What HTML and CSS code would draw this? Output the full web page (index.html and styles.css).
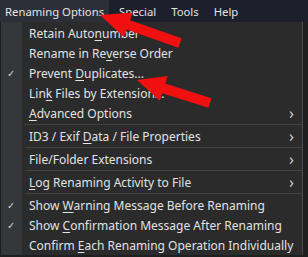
FILE: index.html
```html
<!DOCTYPE html>
<html lang="en">
<head>
<meta charset="UTF-8">
<title>Renaming Options</title>
<link rel="stylesheet" href="styles.css">
</head>
<body>
    <div class="menubar">
        <span class="top active">Renaming Options</span>
        <span class="top">Special</span>
        <span class="top">Tools</span>
        <span class="top">Help</span>
    </div>

    <div class="menu">
        <div class="item"><span class="check"></span><span class="label">Retain Auto<u>n</u>umber</span></div>
        <div class="item"><span class="check"></span><span class="label">Rename in Re<u>v</u>erse Order</span></div>
        <div class="item"><span class="check">&#10003;</span><span class="label">Prevent <u>D</u>uplicates...</span></div>
        <div class="item"><span class="check"></span><span class="label">Lin<u>k</u> Files by Extension...</span></div>
        <div class="item"><span class="check"></span><span class="label"><u>A</u>dvanced Options</span><span class="sub">&#8250;</span></div>
        <div class="sep"></div>
        <div class="item"><span class="check"></span><span class="label">ID3 / Exif <u>D</u>ata / File Properties</span><span class="sub">&#8250;</span></div>
        <div class="sep"></div>
        <div class="item"><span class="check"></span><span class="label">File/Folder Extensions</span><span class="sub">&#8250;</span></div>
        <div class="sep"></div>
        <div class="item"><span class="check"></span><span class="label"><u>L</u>og Renaming Activity to File</span><span class="sub">&#8250;</span></div>
        <div class="sep"></div>
        <div class="item"><span class="check">&#10003;</span><span class="label">Show <u>W</u>arning Message Before Renaming</span></div>
        <div class="item"><span class="check">&#10003;</span><span class="label">Show <u>C</u>onfirmation Message After Renaming</span></div>
        <div class="item"><span class="check"></span><span class="label">Confirm <u>E</u>ach Renaming Operation Individually</span></div>
    </div>

    <!-- red arrows drawn over the screenshot -->
    <svg class="arrows" width="308" height="257" viewBox="0 0 308 257">
        <polygon points="100,15 132.6,12.6 130,20.2 181.7,38.3 178.4,47.7 126.6,29.6 124,37.2" />
        <polygon points="137,80 167.6,76 165.2,83.6 211.5,98.2 208.5,107.8 162.2,93.2 159.8,100.8" />
    </svg>
</body>
</html>
```

FILE: styles.css
```css
/* fondo general */
body {
    margin: 0;
    padding: 0;
    width: 308px;
    height: 257px;
    overflow: hidden;
    background-color: #1f1f1f;
    color: #e2e2e2;
    font-family: "Noto Sans", "Open Sans", sans-serif;
    font-size: 12px;
    position: relative;
}

/* barra de menu */
.menubar {
    height: 22px;
    display: flex;
    gap: 5px;
    font-size: 11.3px;
    background-color: #1d1f2c;
}

.top {
    display: flex;
    align-items: center;
    padding: 0 5px;
}

.top.active {
    background-color: #2c2e38;
}

/* menu desplegable */
.menu {
    width: 302px;
    padding-top: 1px;
    border-right: 1px solid #4a4a4a;
    background: linear-gradient(to right, #1e1e1e 1px, #35373b 1px, #35373b 22px, #2b2b2b 22px);
}

.item {
    height: 20px;
    display: flex;
    align-items: center;
}

.check {
    width: 29px;
    text-align: center;
    padding-right: 7px;
    box-sizing: border-box;
    font-size: 10px;
    color: #d0d0d0;
}

.label {
    flex: 1;
    white-space: nowrap;
}

.label u {
    text-underline-offset: 2px;
}

.sub {
    width: 13px;
    font-size: 16px;
    color: #cfcfcf;
}

.sep {
    height: 1px;
    margin: 1px 0 1px 25px;
    background-color: #424242;
}

/* flechas rojas */
.arrows {
    position: absolute;
    left: 0;
    top: 0;
}

.arrows polygon {
    fill: #f01010;
}
```
